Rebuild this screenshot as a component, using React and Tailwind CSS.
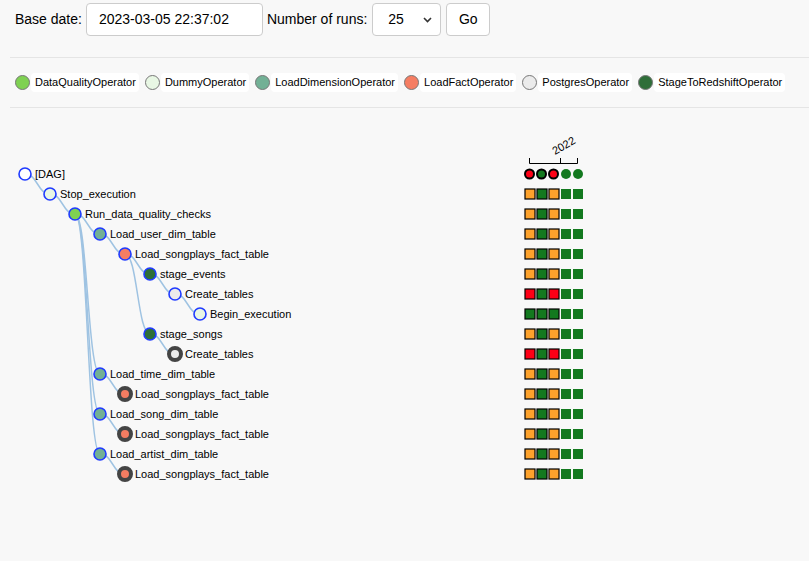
import React from 'react'

const C = {
  dq: '#7fd152',
  dummy: '#e8f7e4',
  dim: '#72b095',
  fact: '#f57d62',
  pg: '#ebebeb',
  stage: '#2f6e39',
}

const legend = [
  ['DataQualityOperator', C.dq],
  ['DummyOperator', C.dummy],
  ['LoadDimensionOperator', C.dim],
  ['LoadFactOperator', C.fact],
  ['PostgresOperator', C.pg],
  ['StageToRedshiftOperator', C.stage],
]

// [label, depth, fill, parent, collapsed, states]
const nodes = [
  ['[DAG]', 0, '#ffffff', null, false, 'RGR'],
  ['Stop_execution', 1, C.dummy, 0, false, 'OGO'],
  ['Run_data_quality_checks', 2, C.dq, 1, false, 'OGO'],
  ['Load_user_dim_table', 3, C.dim, 2, false, 'OGO'],
  ['Load_songplays_fact_table', 4, C.fact, 3, false, 'OGO'],
  ['stage_events', 5, C.stage, 4, false, 'OGO'],
  ['Create_tables', 6, C.pg, 5, false, 'RGR'],
  ['Begin_execution', 7, C.dummy, 6, false, 'GGG'],
  ['stage_songs', 5, C.stage, 4, false, 'OGO'],
  ['Create_tables', 6, C.pg, 8, true, 'RGR'],
  ['Load_time_dim_table', 3, C.dim, 2, false, 'OGO'],
  ['Load_songplays_fact_table', 4, C.fact, 10, true, 'OGO'],
  ['Load_song_dim_table', 3, C.dim, 2, false, 'OGO'],
  ['Load_songplays_fact_table', 4, C.fact, 12, true, 'OGO'],
  ['Load_artist_dim_table', 3, C.dim, 2, false, 'OGO'],
  ['Load_songplays_fact_table', 4, C.fact, 14, true, 'OGO'],
]

const stateColor = { R: '#fe0016', G: '#13791f', O: '#fda22c' }
const green = '#13791f'

const pos = (i) => ({ x: 25 + nodes[i][1] * 25, y: 174 + i * 20 })

function Tree() {
  return (
    <svg width="809" height="453" viewBox="0 108 809 453" className="block">
      {/* links */}
      {nodes.map((n, i) => {
        if (n[3] === null) return null
        const s = pos(n[3])
        const t = pos(i)
        const m = (s.x + t.x) / 2
        return (
          <path
            key={'l' + i}
            d={`M${s.x},${s.y}C${m},${s.y} ${m},${t.y} ${t.x},${t.y}`}
            fill="none"
            stroke="#9fc3e2"
            strokeWidth="1.5"
          />
        )
      })}
      {/* nodes */}
      {nodes.map((n, i) => {
        const p = pos(i)
        return (
          <g key={'n' + i}>
            <circle
              cx={p.x}
              cy={p.y}
              r="6"
              fill={n[2]}
              stroke={n[4] ? '#444444' : '#1f3bff'}
              strokeWidth={n[4] ? 4 : 1.6}
            />
            <text x={p.x + 10} y={p.y + 4} fontSize="11" fill="#000" style={{ fontFamily: '"Liberation Sans", Arial, sans-serif' }}>
              {n[0]}
            </text>
          </g>
        )
      })}
      {/* date header */}
      <path d="M529.5,158V163.5H577.5V158M560.5,163.5V158" fill="none" stroke="#000" strokeWidth="1" />
      <text x="555" y="155" fontSize="11" transform="rotate(-30 555 155)" style={{ fontFamily: '"Liberation Sans", Arial, sans-serif' }}>
        2022
      </text>
      {/* dag run circles */}
      {'RGR'.split('').map((s, j) => (
        <circle key={'c' + j} cx={529.5 + j * 12} cy="174" r="4.5" fill={stateColor[s]} stroke="#000" strokeWidth="2" />
      ))}
      <circle cx="566" cy="174" r="5" fill={green} />
      <circle cx="578" cy="174" r="5" fill={green} />
      {/* task instance squares */}
      {nodes.slice(1).map((n, k) => {
        const y = 194 + k * 20
        return (
          <g key={'r' + k}>
            {n[5].split('').map((s, j) => (
              <rect key={j} x={525 + j * 12} y={y - 5} width="10" height="10" fill={stateColor[s]} stroke="#000" strokeWidth="1.2" />
            ))}
            <rect x="561" y={y - 5} width="10" height="10" fill={green} />
            <rect x="573" y={y - 5} width="10" height="10" fill={green} />
          </g>
        )
      })}
    </svg>
  )
}

export default function App() {
  return (
    <div className="w-[809px] h-[561px] bg-[#f8f8f8] overflow-hidden text-black" style={{ fontFamily: '"Liberation Sans", Arial, sans-serif' }}>
      {/* form */}
      <div className="flex items-center pl-[15px] pt-[3px] text-[14px]">
        <span>Base date:</span>
        <div className="ml-[4px] w-[177px] h-[33px] bg-white border border-[#cccccc] rounded-[4px] pl-[12px] flex items-center">
          2023-03-05 22:37:02
        </div>
        <span className="ml-[4px]">Number of runs:</span>
        <div className="ml-[5px] w-[69px] h-[33px] bg-white border border-[#cccccc] rounded-[4px] pl-[15px] pr-[8px] flex items-center justify-between">
          <span>25</span>
          <svg width="9" height="6" viewBox="0 0 9 6" fill="none" stroke="#333" strokeWidth="1.6">
            <path d="M1 1l3.5 3.5L8 1" />
          </svg>
        </div>
        <div className="ml-[5px] w-[44px] h-[33px] bg-white border border-[#cccccc] rounded-[4px] flex items-center justify-center">
          Go
        </div>
      </div>

      <div className="mt-[21px] ml-[10px] h-px bg-[#e5e5e5]" />

      {/* legend */}
      <div className="h-[49px] flex items-center pl-[15px] gap-[6px] text-[11px]">
        {legend.map(([name, color]) => (
          <div key={name} className="flex items-center gap-[1px]">
            <span className="w-[15px] h-[15px] rounded-full border border-[#777777]" style={{ backgroundColor: color }} />
            <span className="bg-white rounded-[4px] pl-[4px] pr-[3px] h-[19px] flex items-center">{name}</span>
          </div>
        ))}
      </div>

      <div className="ml-[10px] h-px bg-[#e5e5e5]" />

      <Tree />
    </div>
  )
}
